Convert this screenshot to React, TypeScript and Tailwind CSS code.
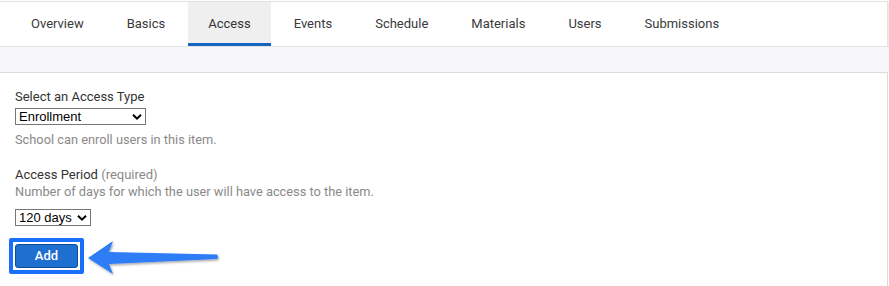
import React, { useState } from 'react';

const tabs = ['Overview', 'Basics', 'Access', 'Events', 'Schedule', 'Materials', 'Users', 'Submissions'];

function Chevron() {
  return (
    <svg
      className="pointer-events-none absolute right-[4px] top-1/2 -translate-y-1/2"
      width="10"
      height="7"
      viewBox="0 0 10 7"
    >
      <path d="M1 1.2 L5 5.2 L9 1.2" fill="none" stroke="#000" strokeWidth="2" />
    </svg>
  );
}

export default function App() {
  const [active, setActive] = useState('Access');
  const [accessType, setAccessType] = useState('Enrollment');
  const [period, setPeriod] = useState('120');

  return (
    <div className="w-[889px] h-[286px] bg-white overflow-hidden text-[#333] font-['Roboto',sans-serif]">
      <div className="mt-px w-[888px] h-[46px] bg-white border-t border-b border-r border-[#e2e2e2] shadow-[1px_1px_2px_rgba(0,0,0,0.12)] flex items-stretch pl-[11px] gap-[3px]">
        {tabs.map(t => (
          <button
            key={t}
            type="button"
            onClick={() => setActive(t)}
            className={`px-5 text-[13px] leading-none border-b-[3px] pt-[1px] ${
              active === t ? 'bg-[#efefef] border-[#1565c0] text-[#333]' : 'border-transparent text-[#3a3a3a]'
            }`}
          >
            {t}
          </button>
        ))}
      </div>

      <div className="h-[25px] bg-[#f7f7fa]" />

      <div className="w-[888px] h-[220px] border-t border-r border-[#dcdcdc] pl-[15px] pt-[16px] text-[13px]">
        <div className="leading-[16px] text-[#333]">Select an Access Type</div>
        <div className="relative mt-[3px] w-[131px]">
          <select
            value={accessType}
            onChange={e => setAccessType(e.target.value)}
            className="appearance-none w-full h-[17px] border border-[#767676] text-[13px] leading-[15px] text-black font-['Liberation_Sans',Arial,sans-serif] pl-[3px] bg-white block"
          >
            <option>Enrollment</option>
            <option>Purchase</option>
            <option>Free</option>
          </select>
          <Chevron />
        </div>
        <div className="mt-[7px] text-[12.8px] text-[#8a8a8a] leading-[16px]">School can enroll users in this item.</div>

        <div className="mt-[19px] leading-[16px] text-[#333]">
          Access Period <span className="text-[#8a8a8a]">(required)</span>
        </div>
        <div className="mt-[1px] text-[12.8px] text-[#8a8a8a] leading-[16px]">
          Number of days for which the user will have access to the item.
        </div>
        <div className="relative mt-[9px] w-[76px]">
          <select
            value={period}
            onChange={e => setPeriod(e.target.value)}
            className="appearance-none w-full h-[17px] border border-[#767676] text-[13px] leading-[15px] text-black font-['Liberation_Sans',Arial,sans-serif] pl-[3px] bg-white block"
          >
            <option value="30">30 days</option>
            <option value="60">60 days</option>
            <option value="90">90 days</option>
            <option value="120">120 days</option>
          </select>
          <Chevron />
        </div>

        <div className="relative mt-[12px] -ml-[6px] flex">
          <span className="block border-4 border-[#1a6ffa] rounded-[2px] p-[2px] bg-white">
            <button
              type="button"
              className="block w-[63px] h-[24px] rounded-[3px] bg-[#1f6fd0] border border-[#0d4c99] text-white text-[13px] font-medium"
            >
              Add
            </button>
          </span>
          <svg
            className="absolute left-[78px] top-[2px]"
            width="134"
            height="36"
            viewBox="0 0 134 36"
          >
            <defs>
              <filter id="sh" x="-10%" y="-30%" width="120%" height="160%">
                <feDropShadow dx="1" dy="1.5" stdDeviation="1" floodColor="#000" floodOpacity="0.35" />
              </filter>
            </defs>
            <path
              d="M1 18 L26 1 L22 12 L130 14.5 Q132 17 130 19 L22 24 L26 34 Z"
              fill="#2d7bf6"
              filter="url(#sh)"
            />
          </svg>
        </div>
      </div>
    </div>
  );
}
